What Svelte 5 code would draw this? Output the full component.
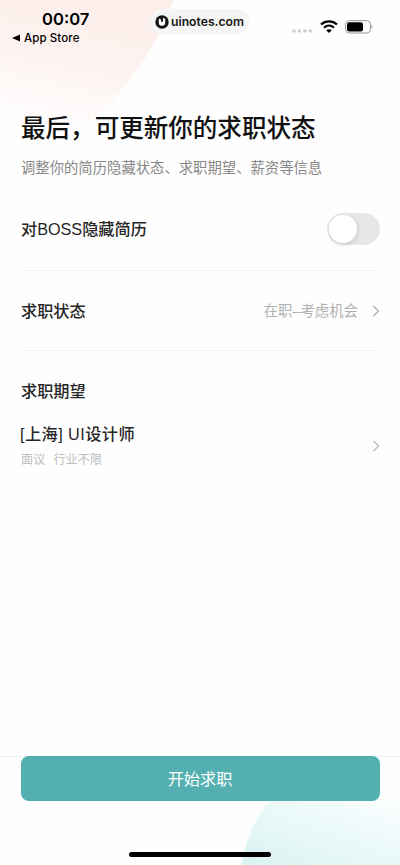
<script lang="ts">
	let hidden = $state(false);

	const status = '在职–考虑机会';
	const expectation = {
		title: '[上海] UI设计师',
		salary: '面议',
		industry: '行业不限'
	};
</script>

{#snippet chevron()}
	<svg class="chevron" width="8" height="14" viewBox="0 0 8 14" fill="none">
		<path d="M1.5 2 6.5 7l-5 5" stroke="currentColor" stroke-width="1.2" />
	</svg>
{/snippet}

<div class="screen" lang="zh-CN">
	<!-- soft corner shapes behind the content -->
	<svg class="backdrop" width="400" height="865" viewBox="0 0 400 865">
		<defs>
			<linearGradient id="peach" gradientUnits="userSpaceOnUse" x1="105" y1="0" x2="75" y2="138">
				<stop offset="0" stop-color="#fdeeea" />
				<stop offset="0.45" stop-color="#fdf3f0" />
				<stop offset="0.8" stop-color="#fefaf9" />
				<stop offset="1" stop-color="#fefefe" />
			</linearGradient>
			<linearGradient id="teal" gradientUnits="userSpaceOnUse" x1="300" y1="885" x2="340" y2="775">
				<stop offset="0" stop-color="#d9f3f2" />
				<stop offset="0.65" stop-color="#effafa" />
				<stop offset="1" stop-color="#fdfeff" />
			</linearGradient>
		</defs>
		<path d="M0 0H173C165 25 147 63 113 100C88 127 52 144 0 146Z" fill="url(#peach)" />
		<circle cx="400" cy="865" r="133" fill="#fcfeff" />
		<circle cx="365" cy="880" r="124" fill="url(#teal)" />
	</svg>

	<header class="status-bar">
		<div class="left">
			<div class="time">00:07</div>
			<div class="back">
				<svg width="8" height="8" viewBox="0 0 8 8"><path d="M0 4 8 .5v7z" /></svg>
				<span>App Store</span>
			</div>
		</div>
		<div class="watermark">
			<svg width="14" height="14" viewBox="0 0 14 14">
				<circle cx="7" cy="7" r="6.7" fill="#151515" />
				<path d="M3.8 3.4 6 4.4v2.4h2V2.8l2.2 1v3.8a3.2 3.2 0 0 1-6.4 0z" fill="#fff" />
			</svg>
			<span>uinotes.com</span>
		</div>
		<div class="indicators">
			<svg class="dots" width="20" height="4" viewBox="0 0 20 4" fill="#cfcfcf">
				<circle cx="2" cy="2" r="1.8" />
				<circle cx="7.4" cy="2" r="1.8" />
				<circle cx="12.8" cy="2" r="1.8" />
				<circle cx="18.2" cy="2" r="1.8" />
			</svg>
			<svg class="wifi" width="18" height="13" viewBox="0 0 18 13" fill="none" stroke="#000">
				<path d="M1 4.5C5.5.3 12.5.3 17 4.5" stroke-width="2.3" />
				<path d="M4 7.7c3-2.7 7-2.7 10 0" stroke-width="2.2" />
				<path d="M6.2 10.2c1.7-1.4 3.9-1.4 5.6 0L9 13z" fill="#000" stroke="none" />
			</svg>
			<svg class="battery" width="28" height="14" viewBox="0 0 28 14">
				<rect x=".5" y=".6" width="25" height="12.4" rx="3.8" fill="none" stroke="#999" />
				<rect x="2" y="2.2" width="16" height="9.2" rx="2.2" />
				<path d="M26.6 5v3.6c1.3-.5 1.3-3.1 0-3.6z" fill="#888" />
			</svg>
		</div>
	</header>

	<main>
		<h1>最后，可更新你的求职状态</h1>
		<p class="intro">调整你的简历隐藏状态、求职期望、薪资等信息</p>

		<div class="row privacy">
			<span class="label">对BOSS隐藏简历</span>
			<button
				class="switch"
				class:on={hidden}
				role="switch"
				aria-checked={hidden}
				aria-label="对BOSS隐藏简历"
				onclick={() => (hidden = !hidden)}
			>
				<span class="knob"></span>
			</button>
		</div>

		<div class="row job-status">
			<span class="label">求职状态</span>
			<span class="value">{status}</span>
			{@render chevron()}
		</div>

		<section>
			<h2 class="label">求职期望</h2>
			<div class="expectation">
				<div>
					<div class="label position">{expectation.title}</div>
					<div class="meta">
						<span>{expectation.salary}</span>
						<span>{expectation.industry}</span>
					</div>
				</div>
				{@render chevron()}
			</div>
		</section>
	</main>

	<footer>
		<button class="submit">开始求职</button>
		<div class="home-indicator"></div>
	</footer>
</div>

<style>
	:global(body) {
		background: #fff;
	}

	.screen {
		position: relative;
		display: flex;
		flex-direction: column;
		box-sizing: border-box;
		width: 400px;
		height: 865px;
		overflow: hidden;
		background: #fefefe;
		color: #262626;
		font-family: 'Liberation Sans', 'Noto Sans CJK SC', sans-serif;
		isolation: isolate;
	}

	.backdrop {
		position: absolute;
		inset: 0;
		z-index: -1;
	}

	.status-bar {
		display: grid;
		grid-template-columns: 150px 100px 1fr;
		height: 109px;
		align-items: start;
		color: #000;
		font-family: Inter, sans-serif;
	}

	.time {
		padding: 8px 0 0 42px;
		font-size: 16.6px;
		font-weight: 600;
		line-height: 22px;
	}

	.back {
		display: flex;
		align-items: center;
		gap: 4px;
		padding-left: 12px;
		font-size: 11.5px;
		font-weight: 500;
		line-height: 16px;
		letter-spacing: 0.1px;
	}

	.watermark {
		display: flex;
		align-items: center;
		gap: 2px;
		box-sizing: border-box;
		width: 100px;
		height: 25px;
		margin-top: 9px;
		padding-left: 5px;
		border-radius: 13px;
		background: #f5f5f5;
		color: #151515;
		font-family: Inter, sans-serif;
		font-size: 12.2px;
		font-weight: 600;
		line-height: 25px;
		white-space: nowrap;
	}

	.indicators {
		display: flex;
		align-items: flex-start;
		padding: 20px 0 0 42px;
	}

	.dots {
		margin-top: 9px;
	}

	.wifi {
		margin-left: 8px;
	}

	.battery {
		margin-left: 7px;
	}

	main {
		flex: 1;
		padding: 0 20px;
	}

	h1 {
		margin: 0 0 0 1px;
		color: #111;
		font-family: 'Noto Sans CJK SC', sans-serif;
		font-size: 24.55px;
		font-weight: 500;
		line-height: 36px;
		white-space: nowrap;
	}

	.intro {
		margin: 12px 0 0 1px;
		color: #888;
		font-size: 14.35px;
		line-height: 22px;
	}

	.row {
		display: flex;
		align-items: center;
		box-sizing: border-box;
		border-bottom: 1px solid #f3f3f3;
	}

	.privacy {
		justify-content: space-between;
		height: 92px;
		padding-top: 8px;
	}

	.job-status {
		height: 80px;
	}

	.label {
		margin: 0;
		padding-left: 1px;
		font-size: 16.2px;
		font-weight: 500;
		line-height: 24px;
	}

	.position {
		padding-left: 0;
		letter-spacing: 0.45px;
	}

	.switch {
		width: 53px;
		height: 32px;
		padding: 2px;
		border: 0;
		border-radius: 16px;
		background: #e7e7e7;
	}

	.knob {
		display: block;
		width: 28px;
		height: 28px;
		border-radius: 50%;
		background: #fff;
		box-shadow: 1px 2px 4px rgba(0, 0, 0, 0.12);
	}

	.switch.on {
		background: #53afb0;
	}

	.switch.on .knob {
		margin-left: 21px;
	}

	.value {
		margin-left: auto;
		padding-top: 1px;
		color: #b0b0b0;
		font-size: 14.4px;
		line-height: 22px;
	}

	.chevron {
		flex: none;
		margin-left: 14px;
		color: #aaa;
	}

	section {
		padding-top: 28px;
	}

	.expectation {
		display: flex;
		align-items: center;
		justify-content: space-between;
		margin-top: 19px;
	}

	.expectation .chevron {
		color: #b8b8b8;
	}

	.meta {
		display: flex;
		gap: 8px;
		padding: 5px 0 0 1px;
		color: #bdbdbd;
		font-size: 12.2px;
		line-height: 18px;
	}

	footer {
		display: flex;
		flex-direction: column;
		align-items: center;
		box-sizing: border-box;
		height: 109px;
		border-top: 1px solid #edf1f2;
	}

	.submit {
		width: 359px;
		height: 45px;
		margin-top: -1px;
		padding: 0 0 2px;
		border: 0;
		border-radius: 8px;
		background: #53afb0;
		color: #fff;
		font-family: 'Noto Sans CJK SC', sans-serif;
		font-size: 16.2px;
	}

	.home-indicator {
		width: 142px;
		height: 5px;
		margin-top: 51px;
		border-radius: 3px;
		background: #000;
	}
</style>
